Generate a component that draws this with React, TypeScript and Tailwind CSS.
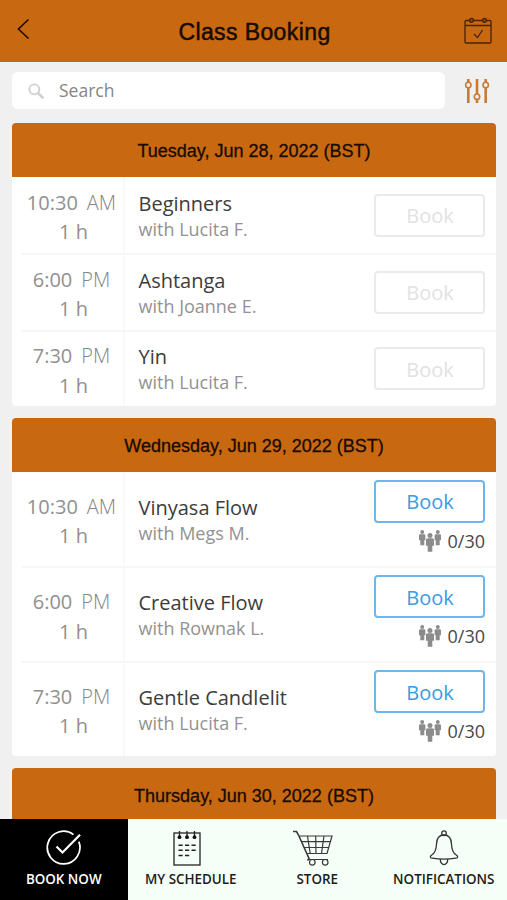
import { clsx } from 'clsx';

interface ClassItem {
  time: string;
  period: string;
  name: string;
  teacher: string;
  spots?: string;
}

interface Day {
  title: string;
  classes: ClassItem[];
}

const days: Day[] = [
  {
    title: 'Tuesday, Jun 28, 2022 (BST)',
    classes: [
      { time: '10:30', period: 'AM', name: 'Beginners', teacher: 'Lucita F.' },
      { time: '6:00', period: 'PM', name: 'Ashtanga', teacher: 'Joanne E.' },
      { time: '7:30', period: 'PM', name: 'Yin', teacher: 'Lucita F.' },
    ],
  },
  {
    title: 'Wednesday, Jun 29, 2022 (BST)',
    classes: [
      { time: '10:30', period: 'AM', name: 'Vinyasa Flow', teacher: 'Megs M.', spots: '0/30' },
      { time: '6:00', period: 'PM', name: 'Creative Flow', teacher: 'Rownak L.', spots: '0/30' },
      { time: '7:30', period: 'PM', name: 'Gentle Candlelit', teacher: 'Lucita F.', spots: '0/30' },
    ],
  },
  { title: 'Thursday, Jun 30, 2022 (BST)', classes: [] },
];

function BackIcon() {
  return (
    <svg className="mb-1" width="13" height="22" viewBox="0 0 13 22" fill="none" stroke="#1c0c00" strokeWidth="1.6">
      <path d="M11.5 1.5 1.5 11l10 9.5" />
    </svg>
  );
}

function CalendarCheckIcon() {
  return (
    <svg width="28" height="28" viewBox="0 0 28 28" fill="none" stroke="#4a2303" strokeWidth="1.3">
      <rect x="1" y="3.5" width="26" height="22.5" rx="1" />
      <path d="M1 8.500h26M10 17l3.500 3.500 5-7.500" />
      <circle cx="7.5" cy="3.3" r="2" fill="#8d460a" />
      <circle cx="20.5" cy="3.3" r="2" fill="#8d460a" />
    </svg>
  );
}

function SearchIcon() {
  return (
    <svg width="16" height="16" viewBox="0 0 16 16" fill="none" stroke="#cfcfcf">
      <circle cx="6.3" cy="6.3" r="5" strokeWidth="1.8" />
      <path d="m10.2 10.2 4.3 4.3" strokeWidth="2.6" strokeLinecap="round" />
    </svg>
  );
}

function FilterIcon() {
  return (
    <svg width="26" height="26" viewBox="0 0 26 26" fill="none" stroke="#cc7a2e">
      <path d="M4.3 1v3M4.3 9.500V25M13 1v15M13 21.500V25M21.700 1v3M21.700 9.500V25" strokeWidth="2.6" />
      <circle cx="4.3" cy="7" r="2.7" strokeWidth="1.6" />
      <circle cx="13" cy="18.7" r="2.7" strokeWidth="1.6" />
      <circle cx="21.7" cy="7" r="2.7" strokeWidth="1.6" />
    </svg>
  );
}

function PeopleIcon() {
  return (
    <svg width="22" height="22" viewBox="0 0 22 22" fill="#8c8c8c">
      <circle cx="3.2" cy="2" r="2" />
      <path d="M1.200 4.300h4q1.200 0 1.200 1.200v4.700H5.300v5H1.300v-5H0V5.500q0-1.200 1.200-1.200z" />
      <circle cx="18.8" cy="2" r="2" />
      <path d="M16.800 4.300h4q1.200 0 1.200 1.200v4.700h-1.300v5h-4v-5h-1.100V5.500q0-1.200 1.200-1.200z" />
      <circle cx="11" cy="5.4" r="2.5" />
      <path d="M8.700 8.200h4.600q1.700 0 1.700 1.500v6h-1.700v6H8.700v-6H7v-6q0-1.500 1.700-1.500z" />
    </svg>
  );
}

function BookNowIcon() {
  return (
    <svg width="36" height="36" viewBox="0 0 36 36" fill="none" stroke="#fff" strokeWidth="1.7">
      <path d="M27.500 4.600A16.300 16.300 0 1 0 32.800 11.600" />
      <path d="M10.500 16.500l6 6L34 4.800" strokeWidth="2.2" />
    </svg>
  );
}

function ScheduleIcon() {
  return (
    <svg className="-ml-[7px]" width="28" height="36" viewBox="0 0 28 36" fill="none" stroke="#222" strokeWidth="1.3">
      <rect x="1" y="3" width="26" height="32" />
      <path d="M6.500 1v6M14 1v6M21.500 1v6" />
      <g fill="#111" stroke="none">
        <circle cx="6.5" cy="7.2" r="1.9" />
        <circle cx="14" cy="7.2" r="1.9" />
        <circle cx="21.5" cy="7.2" r="1.9" />
      </g>
      <path d="M5.500 15.300h4.200M12 15.300h4.200M18.500 15.300h4.200M5.500 20.300h4.200M12 20.300h4.200M18.500 20.300h4.200M5.500 25.600h4.200M12 25.600h4.200" strokeWidth="1.5" />
    </svg>
  );
}

function CartIcon() {
  return (
    <svg className="mr-2" width="42" height="36" viewBox="0 0 42 36" fill="none" stroke="#3a3a3a" strokeWidth="1.2">
      <path d="M1 1.500h3.500l2 3.500L17 28.500l-1.500 2" strokeWidth="1.6" />
      <path d="M7.500 6H40l-5 17.500H15M9.800 11.700h28.600M12.300 17.500h24.500M16.500 29.500H36" />
      <path d="M15.500 6l2.700 17.500M23.700 6l.3 17.500M32 6l-2.500 17.500" />
      <circle cx="20.3" cy="32.3" r="2.8" />
      <circle cx="33.2" cy="32.3" r="2.8" />
    </svg>
  );
}

function BellIcon() {
  return (
    <svg width="30" height="36" viewBox="0 0 30 36" fill="none" stroke="#333" strokeWidth="1.3">
      <circle cx="15" cy="3.2" r="2.3" />
      <path d="M15 5C9.500 5 7.700 9 7.500 14c-.2 6-1.500 9-4.800 11-1.900 1.200-1.800 3 .3 3.200 7 1.100 17 1.100 24 0 2.100-.2 2.200-2 .3-3.200-3.300-2-4.600-5-4.800-11C22.300 9 20.500 5 15 5z" />
      <path d="M11.300 29c-.3 7.500 7.700 7.500 7.400 0" />
    </svg>
  );
}

const tabs = [
  { label: 'BOOK NOW', icon: <BookNowIcon />, active: true },
  { label: 'MY SCHEDULE', icon: <ScheduleIcon /> },
  { label: 'STORE', icon: <CartIcon /> },
  { label: 'NOTIFICATIONS', icon: <BellIcon /> },
];

function ClassRow({ item, first }: { item: ClassItem; first: boolean }) {
  const open = Boolean(item.spots);
  return (
    <div className={clsx('ml-[10px] flex', open ? 'h-[94.6px]' : 'h-[76.3px]', !first && 'border-t-2 border-[#f5f6f6]')}>
      <div className="flex w-[103px] shrink-0 flex-col items-center justify-center border-r-2 border-[#f8f9f9] pt-[4px] text-[20px] leading-[29.5px] text-[#909090]">
        <p className="mr-[2px] whitespace-nowrap">
          {item.time}
          <span className="ml-[9px] font-light text-[#858585]">{item.period}</span>
        </p>
        <p className="ml-[2px]">1 h</p>
      </div>
      <div className="flex flex-1 flex-col justify-center pt-px pl-[13.5px]">
        <p className="text-[20px] leading-[26px] text-[#3c3c3c]">{item.name}</p>
        <p className="text-[18px] leading-[24px] text-[#929292]">with {item.teacher}</p>
      </div>
      <div className={clsx('flex flex-col items-end pr-[11px]', !open && 'justify-center', open && (first ? 'pt-2' : 'pt-[7px]'))}>
        <button
          className={clsx(
            'h-[43px] w-[111px] rounded-[4px] border-2 pt-[2px] pl-px text-[20px]',
            open ? 'border-[#6db7ec] text-[#3a9be0]' : 'border-[#e9eaea] text-[#e1e2e2]'
          )}
        >
          Book
        </button>
        {open && (
          <div className="mt-[5px] flex items-center gap-[7px] text-[18px] leading-[26px] text-[#484848]">
            <PeopleIcon />
            <span>{item.spots}</span>
          </div>
        )}
      </div>
    </div>
  );
}

export default function App() {
  return (
    <div className="flex h-[900px] w-[507px] flex-col overflow-hidden bg-[#f0f0f0] font-['Open_Sans',sans-serif]">
      <header className="grid h-[61.5px] shrink-0 grid-cols-[40px_1fr_40px] items-center bg-[#c86810] pr-[15px] pl-[17px]">
        <BackIcon />
        <h1 className="pt-[3px] text-center font-['Liberation_Sans',sans-serif] text-[23px] tracking-[0.4px] text-[#180b00] [-webkit-text-stroke:0.5px_#180b00]">
          Class Booking
        </h1>
        <div className="flex justify-end">
          <CalendarCheckIcon />
        </div>
      </header>

      <div className="flex shrink-0 items-center pt-[10.5px] pl-3">
        <div className="flex h-[37px] w-[433px] items-center gap-[15px] rounded-md bg-white pl-4">
          <SearchIcon />
          <span className="text-[17.5px] text-[#858585]">Search</span>
        </div>
        <div className="ml-[19px]">
          <FilterIcon />
        </div>
      </div>

      <main className="flex min-h-0 flex-1 flex-col gap-3 overflow-hidden pt-[14px] pr-[11px] pl-3">
        {days.map(day => (
          <section key={day.title} className="shrink-0 overflow-hidden rounded-[4px] bg-white">
            <h2 className="flex h-[54px] items-center justify-center bg-[#c86810] pt-[3px] font-['Liberation_Sans',sans-serif] text-[18px] text-[#180b00] [-webkit-text-stroke:0.3px_#180b00]">
              {day.title}
            </h2>
            {day.classes.map((item, i) => (
              <ClassRow key={item.name} item={item} first={i === 0} />
            ))}
          </section>
        ))}
      </main>

      <nav className="grid h-[81px] shrink-0 grid-cols-[127.5px_1fr_1fr_1fr] bg-[#f6fff7]">
        {tabs.map(tab => (
          <div
            key={tab.label}
            className={clsx(
              'flex flex-col items-center pt-[11px] text-[13.4px] font-semibold whitespace-nowrap',
              tab.active ? 'bg-black text-white' : 'text-[#1c1c1c]'
            )}
          >
            {tab.icon}
            <span className="mt-[3px]">{tab.label}</span>
          </div>
        ))}
      </nav>
    </div>
  );
}
